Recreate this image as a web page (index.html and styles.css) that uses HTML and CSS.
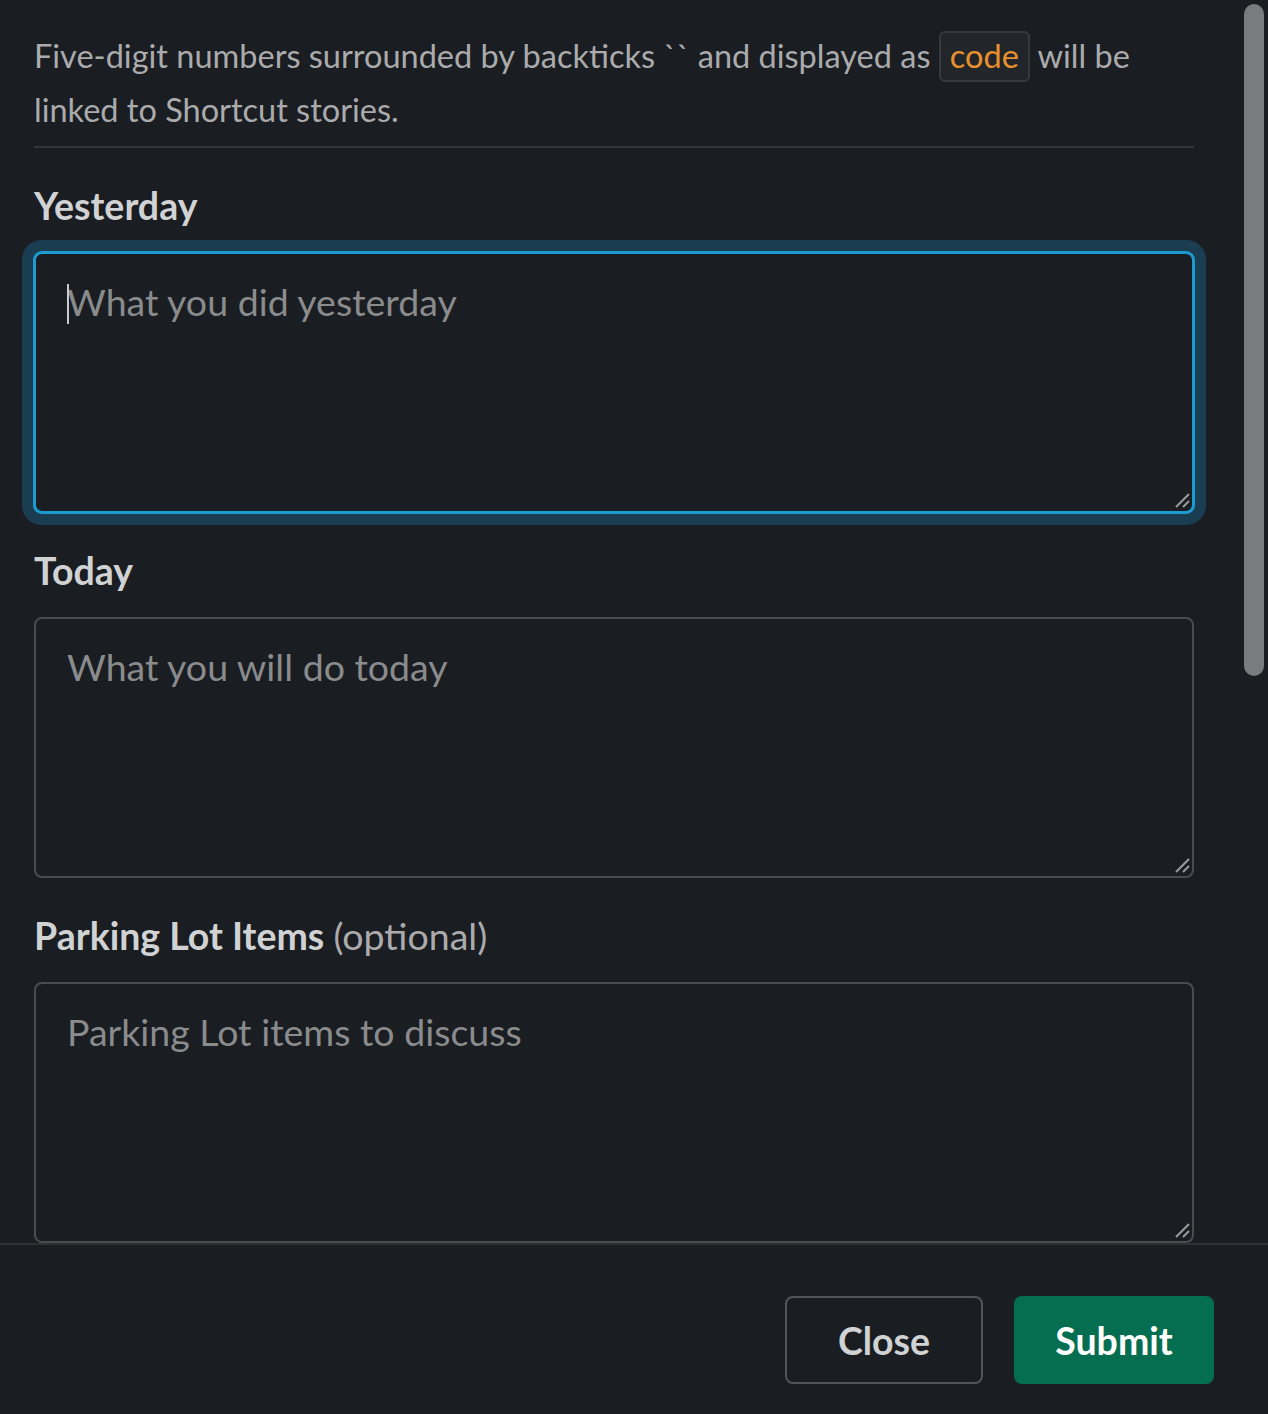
FILE: index.html
```html
<!DOCTYPE html>
<html lang="en">
<head>
<meta charset="utf-8">
<title>Standup</title>
<link rel="stylesheet" href="styles.css">
</head>
<body>
<div class="modal">
  <div class="body">
    <p class="intro">Five-digit numbers surrounded by backticks `` and displayed as <code class="code">code</code> will be linked to Shortcut stories.</p>
    <hr class="divider">
    <div class="field">
      <label class="label" for="y">Yesterday</label>
      <div class="input-wrap">
        <textarea id="y" class="input focused" placeholder="What you did yesterday"></textarea>
        <span class="caret"></span>
        <svg class="grip" width="16" height="16" viewBox="0 0 16 16"><path d="M1 14 L14 1 M8 14 L14 8" stroke="#9a9b9d" stroke-width="2" fill="none"/></svg>
      </div>
    </div>
    <div class="field">
      <label class="label" for="t">Today</label>
      <div class="input-wrap">
        <textarea id="t" class="input" placeholder="What you will do today"></textarea>
        <svg class="grip" width="16" height="16" viewBox="0 0 16 16"><path d="M1 14 L14 1 M8 14 L14 8" stroke="#9a9b9d" stroke-width="2" fill="none"/></svg>
      </div>
    </div>
    <div class="field">
      <label class="label" for="p">Parking Lot Items <span class="optional">(optional)</span></label>
      <div class="input-wrap">
        <textarea id="p" class="input" placeholder="Parking Lot items to discuss"></textarea>
        <svg class="grip" width="16" height="16" viewBox="0 0 16 16"><path d="M1 14 L14 1 M8 14 L14 8" stroke="#9a9b9d" stroke-width="2" fill="none"/></svg>
      </div>
    </div>
  </div>
  <div class="footer">
    <button class="btn btn-close">Close</button>
    <button class="btn btn-submit">Submit</button>
  </div>
  <div class="scrollbar"></div>
</div>
</body>
</html>
```

FILE: styles.css
```css
html, body {
  margin: 0;
  padding: 0;
  background: #1a1d21;
  color-scheme: dark;
}
body {
  font-family: Lato, "Noto Sans", sans-serif;
  color: #d1d2d3;
}
.modal {
  position: relative;
  width: 1268px;
  height: 1414px;
  display: flex;
  flex-direction: column;
  overflow: hidden;
}
.body {
  height: 1243px;
  overflow: hidden;
  padding: 29px 74px 0 34px;
  box-sizing: border-box;
  flex: none;
}
.intro {
  margin: 0;
  font-size: 32.5px;
  line-height: 54px;
  color: #ababad;
}
.code {
  font-family: Lato, "Noto Sans", sans-serif;
  font-size: 32.5px;
  color: #e8912d;
  background: #222529;
  border: 2px solid #38393d;
  border-radius: 6px;
  padding: 3px 9px 5px;
}
.divider {
  margin: 9px 0 0;
  border: 0;
  height: 2px;
  background: #323438;
}
.field {
  margin-top: 36px;
  display: flex;
  flex-direction: column;
}
.label {
  font-size: 37.5px;
  font-weight: 700;
  line-height: 44px;
  color: #d1d2d3;
  margin-bottom: 24px;
}
.optional {
  font-weight: 400;
  color: #ababad;
}
.input-wrap {
  position: relative;
}
.input {
  display: block;
  width: 100%;
  height: 261px;
  box-sizing: border-box;
  background: #1a1d21;
  border: 2px solid #4a4c50;
  border-radius: 8px;
  padding: 22px 31px;
  font-family: Lato, "Noto Sans", sans-serif;
  font-size: 37.5px;
  line-height: 52px;
  color: #d1d2d3;
  outline: none;
  resize: none;
}
.input::placeholder {
  color: #8a8b8d;
  opacity: 1;
}
.input.focused {
  border-color: #1d9bd1;
  box-shadow: 0 0 0 1px #1d9bd1, 0 0 0 12px #1b3d51;
}
.caret {
  position: absolute;
  left: 33px;
  top: 32px;
  width: 2px;
  height: 40px;
  background: #c9cacb;
}
.grip {
  position: absolute;
  right: 3px;
  bottom: 4px;
}
.footer {
  flex: 1;
  border-top: 2px solid #2f3135;
  display: flex;
  justify-content: flex-end;
  align-items: flex-start;
  gap: 31px;
  padding: 51px 54px 0 0;
}
.btn {
  height: 88px;
  border-radius: 8px;
  font-family: Lato, "Noto Sans", sans-serif;
  font-size: 37.5px;
  font-weight: 700;
  padding: 0;
  cursor: pointer;
}
.btn-close {
  width: 198px;
  background: transparent;
  border: 2px solid #535559;
  color: #d1d2d3;
}
.btn-submit {
  width: 200px;
  background: #056e50;
  border: 0;
  color: #ffffff;
}
.scrollbar {
  position: absolute;
  right: 4px;
  top: 4px;
  width: 20px;
  height: 672px;
  border-radius: 10px;
  background: #7a7b7d;
}
```
